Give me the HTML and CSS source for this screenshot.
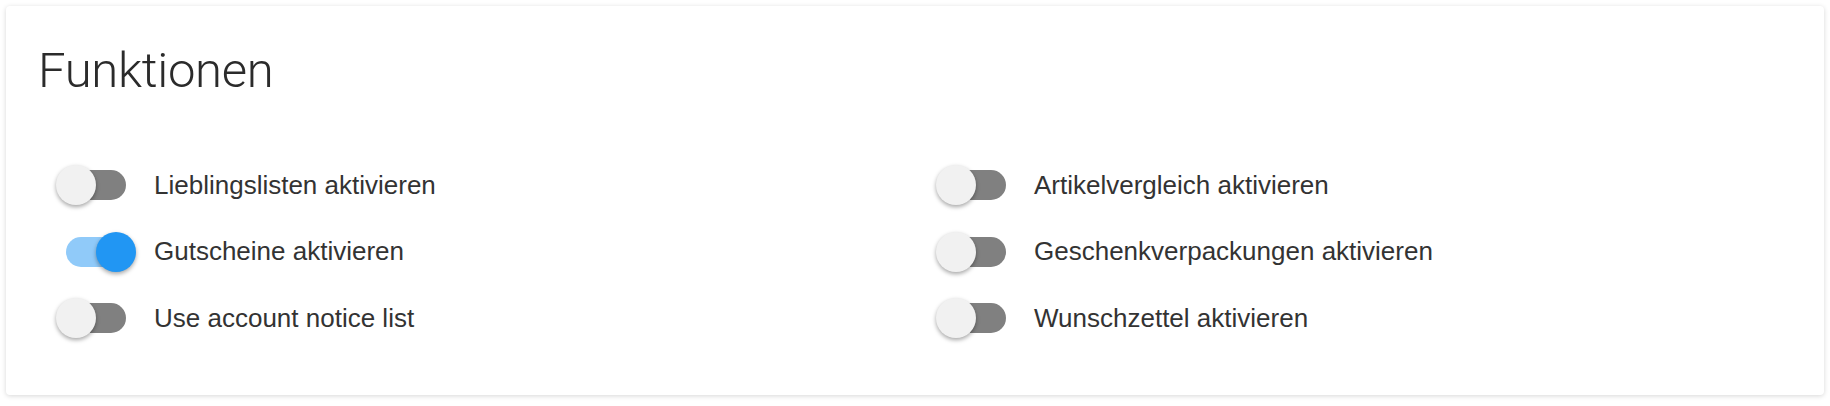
FILE: index.html
```html
<!DOCTYPE html>
<html lang="de">
<head>
<meta charset="utf-8">
<title>Funktionen</title>
<link rel="stylesheet" href="styles.css">
</head>
<body>
<section class="card">
  <h1 class="title">Funktionen</h1>
  <div class="grid">
    <label class="item"><span class="switch"><span class="knob"></span></span><span class="label">Lieblingslisten aktivieren</span></label>
    <label class="item"><span class="switch"><span class="knob"></span></span><span class="label">Artikelvergleich aktivieren</span></label>
    <label class="item"><span class="switch on"><span class="knob"></span></span><span class="label">Gutscheine aktivieren</span></label>
    <label class="item"><span class="switch"><span class="knob"></span></span><span class="label">Geschenkverpackungen aktivieren</span></label>
    <label class="item"><span class="switch"><span class="knob"></span></span><span class="label">Use account notice list</span></label>
    <label class="item"><span class="switch"><span class="knob"></span></span><span class="label">Wunschzettel aktivieren</span></label>
  </div>
</section>
</body>
</html>
```

FILE: styles.css
```css
html, body {
  margin: 0;
  padding: 0;
  background: #ffffff;
}

body {
  padding: 6px;
  font-family: "Liberation Sans", Arial, sans-serif;
  color: #333333;
}

.card {
  background: #ffffff;
  border-radius: 4px;
  box-shadow: 0 1px 5px rgba(0, 0, 0, 0.16);
  height: 389px;
  box-sizing: border-box;
  padding: 35px 36px 0 36px;
}

.title {
  margin: 0 0 0 -4px;
  font-family: Roboto, "Liberation Sans", sans-serif;
  font-weight: 300;
  font-size: 49px;
  line-height: 60px;
  color: #2b2b2b;
  letter-spacing: -0.3px;
}

.grid {
  margin-top: 51px;
  display: grid;
  grid-template-columns: 880px 1fr;
  grid-auto-rows: 66.5px;
}

.item {
  display: flex;
  align-items: center;
  cursor: pointer;
}

.switch {
  position: relative;
  flex: none;
  width: 60px;
  height: 30px;
  margin-left: 24px;
  border-radius: 15px;
  background: #808080;
}

.knob {
  position: absolute;
  top: -5px;
  left: -10px;
  width: 40px;
  height: 40px;
  border-radius: 50%;
  background: #f1f1f1;
  box-shadow: 0 2px 4px rgba(0, 0, 0, 0.35);
}

.switch.on {
  background: #90caf9;
}

.switch.on .knob {
  left: 30px;
  background: #2196f3;
}

.label {
  margin-left: 28px;
  font-size: 26px;
  color: #333333;
}
```
